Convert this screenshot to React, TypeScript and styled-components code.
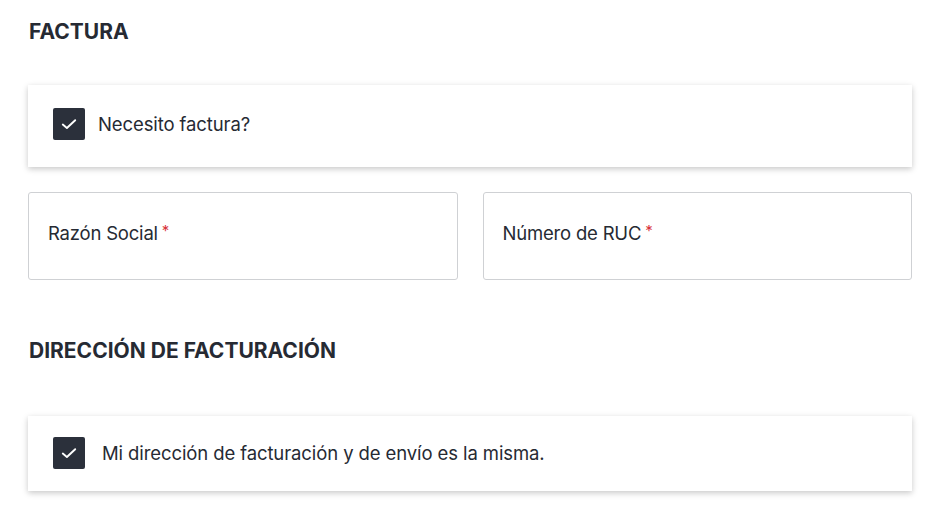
import styled, { createGlobalStyle } from 'styled-components';

const GlobalStyle = createGlobalStyle`
  html, body {
    margin: 0;
    padding: 0;
    background: #ffffff;
  }
  body {
    font-family: Inter, 'Noto Sans', 'Liberation Sans', sans-serif;
    color: #262a33;
  }
`;

const Page = styled.div`
  display: flex;
  flex-direction: column;
  padding: 19px 32px 30px 28px;
`;

const SectionTitle = styled.h2<{ $gap: number }>`
  margin: 0 0 ${(p) => p.$gap}px 1px;
  font-size: 21px;
  line-height: 26px;
  font-weight: 700;
  letter-spacing: 0;
  color: #262a33;
  text-transform: uppercase;
`;

const CheckCard = styled.label<{ $top: number; $bottom: number; $textGap: number }>`
  display: flex;
  align-items: center;
  gap: ${(p) => p.$textGap}px;
  padding: ${(p) => p.$top}px 25px ${(p) => p.$bottom}px;
  background: #ffffff;
  box-shadow: 0 2px 6px rgba(0, 0, 0, 0.22);
  cursor: pointer;
`;

const Box = styled.span`
  display: flex;
  align-items: center;
  justify-content: center;
  width: 32px;
  height: 32px;
  border-radius: 2px;
  background: #2b303b;
  flex-shrink: 0;
`;

const CheckText = styled.span`
  font-size: 18.5px;
  line-height: 24px;
  color: #262a33;
  letter-spacing: -0.1px;
`;

const FieldRow = styled.div`
  display: grid;
  grid-template-columns: 1fr 1fr;
  gap: 25px;
  margin-top: 25px;
  margin-bottom: 58px;
`;

const Field = styled.div`
  height: 88px;
  box-sizing: border-box;
  border: 1px solid #cfd1d4;
  border-radius: 3px;
  padding: 28px 19px 0;
`;

const FieldLabel = styled.span`
  font-size: 18.5px;
  line-height: 24px;
  color: #262a33;
  letter-spacing: -0.2px;
`;

const Required = styled.sup`
  color: #d8333b;
  font-size: 15px;
  margin-left: 4px;
  vertical-align: 4px;
  line-height: 0;
`;

const Check = () => (
  <svg width="16" height="16" viewBox="0 0 16 16" fill="none">
    <path d="M1.8 8.6 L5.9 12 L14.2 4.2" stroke="#ffffff" strokeWidth="1.9" strokeLinecap="round" strokeLinejoin="round" />
  </svg>
);

export default function App() {
  return (
    <>
      <GlobalStyle />
      <Page>
        <SectionTitle $gap={40}>Factura</SectionTitle>
        <CheckCard $top={23} $bottom={27} $textGap={13}>
          <Box>
            <Check />
          </Box>
          <CheckText>Necesito factura?</CheckText>
        </CheckCard>
        <FieldRow>
          <Field>
            <FieldLabel>
              Razón Social<Required>*</Required>
            </FieldLabel>
          </Field>
          <Field>
            <FieldLabel>
              Número de RUC<Required>*</Required>
            </FieldLabel>
          </Field>
        </FieldRow>
        <SectionTitle $gap={52}>Dirección de facturación</SectionTitle>
        <CheckCard $top={21} $bottom={22} $textGap={17}>
          <Box>
            <Check />
          </Box>
          <CheckText>Mi dirección de facturación y de envío es la misma.</CheckText>
        </CheckCard>
      </Page>
    </>
  );
}
